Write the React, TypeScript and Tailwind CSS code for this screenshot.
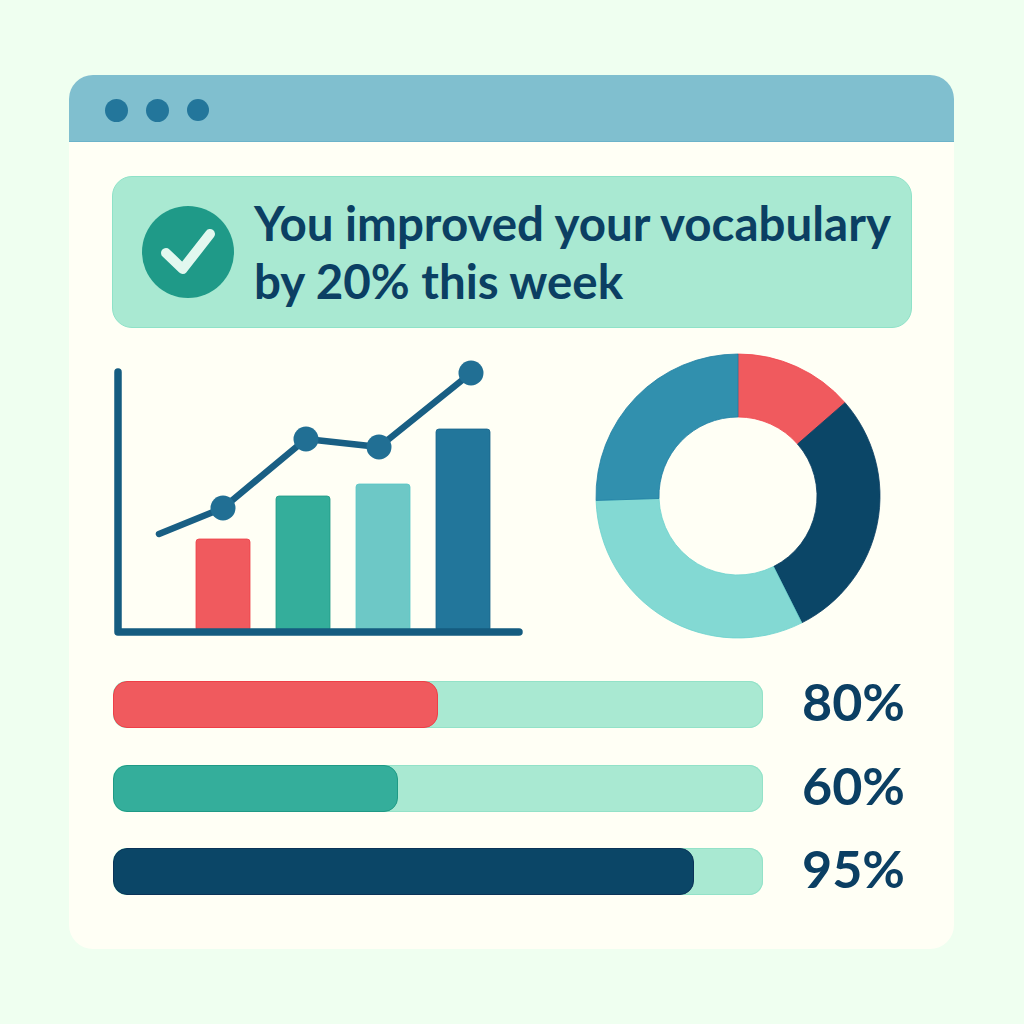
const bars = [
  { x: 196, y: 539, fill: "#f05a5e", stroke: "#ee3f47" },
  { x: 276, y: 496, fill: "#34ae9b", stroke: "#1f9a85" },
  { x: 356, y: 484, fill: "#6dc8c6", stroke: "#58c6c6" },
  { x: 436, y: 429, fill: "#22769b", stroke: "#19648c" },
]

const points = [
  [223, 508],
  [306, 439],
  [379, 447],
  [471, 373],
]

const cx = 148
const cy = 146
const outer = 142
const inner = 79

// angles in degrees, clockwise from twelve o'clock
const slices = [
  { from: 0, to: 48.9, fill: "#f05a5e", stroke: "#f0444c" },
  { from: 48.9, to: 153.3, fill: "#0b4667", stroke: "#0b3f63" },
  { from: 153.3, to: 268.2, fill: "#83d9d3", stroke: "#6bd2cd" },
  { from: 268.2, to: 360, fill: "#3190ae", stroke: "#1f7fa3" },
]

function polar(r: number, deg: number) {
  const a = (deg * Math.PI) / 180
  return `${(cx + r * Math.sin(a)).toFixed(2)} ${(cy - r * Math.cos(a)).toFixed(2)}`
}

function slicePath(from: number, to: number) {
  const large = to - from > 180 ? 1 : 0
  return `M${polar(outer, from)} A${outer} ${outer} 0 ${large} 1 ${polar(outer, to)} L${polar(inner, to)} A${inner} ${inner} 0 ${large} 0 ${polar(inner, from)} Z`
}

const progress = [
  { label: "80%", width: 325, className: "bg-[#f05a5e] border-[#ee3f47]" },
  { label: "60%", width: 285, className: "bg-[#34ae9b] border-[#1f9a85]" },
  { label: "95%", width: 581, className: "bg-[#0b4667] border-[#0b3358]" },
]

export default function App() {
  return (
    <div className="min-h-[1024px] bg-[#effff0] pt-[75px] pl-[69px] font-['Lato',sans-serif] text-[#0b3f63]">
      <div className="h-[874px] w-[885px] overflow-hidden rounded-[24px] bg-[#fffff5]">
        <div className="flex h-[67px] items-center gap-[18px] border-b border-[#6cb3c9] bg-[#80bfcf] pt-[4px] pl-[36px]">
          <span className="h-[23px] w-[23px] rounded-full bg-[#23769b]" />
          <span className="h-[23px] w-[23px] rounded-full bg-[#23769b]" />
          <span className="h-[22px] w-[22px] rounded-full bg-[#23769b]" />
        </div>

        <div className="px-[43px] pt-[34px]">
          <div className="flex h-[152px] w-[800px] items-center gap-[20px] rounded-[20px] border border-[#8fe2c8] bg-[#a9e9d2] pl-[29px]">
            <div className="flex h-[92px] w-[92px] shrink-0 items-center justify-center rounded-full bg-[#1f9a88]">
              <svg width="92" height="92" viewBox="0 0 92 92" fill="none">
                <path d="M24 47 L40.7 63 L68 28" stroke="#e2f8ef" strokeWidth="10" strokeLinecap="round" strokeLinejoin="round" />
              </svg>
            </div>
            <p className="text-[47.5px] leading-[58px] font-bold">
              You improved your vocabulary
              <br />
              by 20% this week
            </p>
          </div>

          <div className="mt-[22px] flex">
            <svg width="418" height="300" viewBox="112 350 418 300" fill="none">
              {bars.map((b) => (
                <rect key={b.x} x={b.x} y={b.y} width="54" height={631 - b.y} rx="3" fill={b.fill} stroke={b.stroke} strokeWidth="0.8" />
              ))}
              <path d="M118 372 V632 H519" stroke="#155c80" strokeWidth="7.5" strokeLinecap="round" strokeLinejoin="round" />
              <path d="M159 534 L223 508 L306 439 L379 447 L471 373" stroke="#195f84" strokeWidth="6.5" strokeLinecap="round" strokeLinejoin="round" />
              {points.map(([x, y]) => (
                <circle key={x} cx={x} cy={y} r="12.5" fill="#216f94" />
              ))}
            </svg>
            <svg className="ml-[60px]" width="300" height="300" viewBox="0 0 300 300">
              {slices.map((s) => (
                <path key={s.from} d={slicePath(s.from, s.to)} fill={s.fill} stroke={s.stroke} strokeWidth="0.8" />
              ))}
            </svg>
          </div>

          <div className="mt-[31px] flex flex-col gap-[36.5px] pl-[1px]">
            {progress.map((row) => (
              <div key={row.label} className="flex items-center gap-[39px]">
                <div className="h-[47px] w-[650px] overflow-hidden rounded-[14px] bg-[#a9e9d2] shadow-[inset_0_0_0_1px_#93e2c8]">
                  <div className={`h-[47px] rounded-[14px] border ${row.className}`} style={{ width: row.width }} />
                </div>
                <span className="-translate-y-[3px] text-[52px] leading-[47px] font-bold">{row.label}</span>
              </div>
            ))}
          </div>
        </div>
      </div>
    </div>
  )
}
